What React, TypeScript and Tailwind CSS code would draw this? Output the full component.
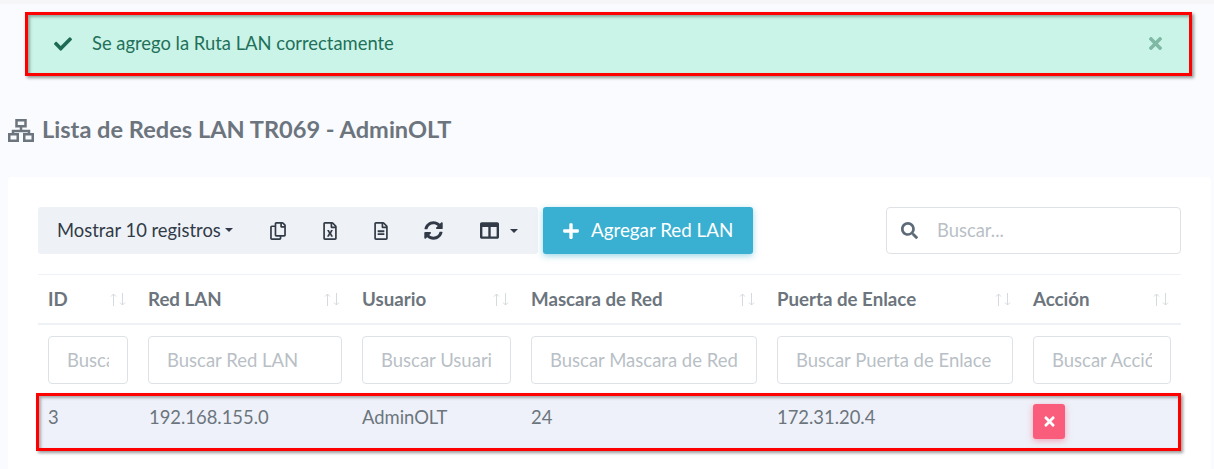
import { FC } from "react";
import {
  FaCheck,
  FaColumns,
  FaPlus,
  FaRegCopy,
  FaRegFileAlt,
  FaRegFileExcel,
  FaSearch,
  FaSyncAlt,
  FaTimes,
} from "react-icons/fa";

const columns = [
  { title: "ID", filter: "Buscar ID" },
  { title: "Red LAN", filter: "Buscar Red LAN" },
  { title: "Usuario", filter: "Buscar Usuario" },
  { title: "Mascara de Red", filter: "Buscar Mascara de Red" },
  { title: "Puerta de Enlace", filter: "Buscar Puerta de Enlace" },
  { title: "Acción", filter: "Buscar Acción" },
];

const Caret: FC = () => (
  <span className="inline-block border-x-[4px] border-t-[4px] border-x-transparent border-t-[#313a46]" />
);

const SortArrows: FC = () => (
  <svg width="18" height="13" viewBox="0 0 18 13" fill="none" stroke="#d5dade" strokeWidth="1" className="mr-[1px]">
    <path d="M4.5 13V1M2 3.5 4.5 1 7 3.5" />
    <path d="M13.5 0v12M11 9.5l2.5 2.5 2.5-2.5" />
  </svg>
);

const NetworkIcon: FC = () => (
  <svg width="26" height="23" viewBox="0 0 26 23" fill="none" stroke="#6c757d" strokeWidth="2.5" className="mr-[8px]">
    <rect x="8.5" y="1.25" width="9" height="6" />
    <path d="M13 7v5M5 15v-3h16v3" />
    <rect x="1.25" y="15.25" width="8.5" height="6.5" />
    <rect x="16.25" y="15.25" width="8.5" height="6.5" />
  </svg>
);

const App: FC = () => {
  return (
    <div className="h-[469px] overflow-hidden bg-[#fafbfe] font-['Lato',sans-serif] text-[18.4px] text-[#6c757d]">
      <div className="h-1 bg-[#f6f6f8]" />

      <div className="mt-2 ml-[25px] flex h-[64px] w-[1167px] items-center border-3 border-[#f00] bg-[#caf4e7] pr-[24px] pb-[1px] pl-[26px] text-[#22705a] shadow-[2px_2px_3px_rgba(0,0,0,0.4),inset_2px_2px_3px_rgba(0,0,0,0.3)]">
        <FaCheck className="text-[18px] text-[#1e6b55]" />
        <span className="ml-[20px] flex-1">Se agrego la Ruta LAN correctamente</span>
        <FaTimes className="text-[19px] text-[#7fb8a5]" />
      </div>

      <h1 className="mt-[39px] ml-2 flex h-[30px] items-center text-[23.6px] font-bold">
        <NetworkIcon />
        Lista de Redes LAN TR069 - AdminOLT
      </h1>

      <section className="mt-[32px] ml-2 h-[300px] w-[1203px] rounded-[4px] bg-white px-[30px] pt-[30px]">
        <div className="flex h-[47px] items-stretch">
          <div className="flex w-[500px] items-center rounded-[3px] bg-[#eef2f7] text-[#313a46]">
            <span className="ml-[19px] flex w-[176px] items-center justify-between">
              Mostrar 10 registros <Caret />
            </span>
            <FaRegCopy className="ml-[36px] text-[18px]" />
            <FaRegFileExcel className="ml-[34px] text-[18px]" />
            <FaRegFileAlt className="ml-[33px] text-[18px]" />
            <FaSyncAlt className="ml-[34px] text-[19px]" />
            <FaColumns className="ml-[37px] text-[19px]" />
            <span className="ml-[11px] flex">
              <Caret />
            </span>
          </div>
          <button className="ml-[5px] flex w-[210px] items-center rounded-[3px] bg-[#39afd1] pl-[19px] text-[18.8px] text-white shadow-[0_2px_6px_rgba(57,175,209,0.5)]">
            <FaPlus className="mr-[11px] text-[18px]" />
            Agregar Red LAN
          </button>
          <div className="ml-auto flex w-[295px] items-center rounded-[4px] border border-[#dee2e6] pl-[14px]">
            <FaSearch className="text-[17px] text-[#5c6b77]" />
            <input
              placeholder="Buscar..."
              className="ml-[19px] w-[200px] outline-none placeholder:text-[#b9bfc6]"
            />
          </div>
        </div>

        <div className="mt-[20px] grid grid-cols-[100px_214px_169px_246px_256px_158px] border-t border-b-2 border-[#eef2f7]">
          {columns.map((col) => (
            <div key={col.title} className="flex h-[48px] items-center justify-between px-[10px] text-[18.7px] font-bold">
              {col.title}
              <SortArrows />
            </div>
          ))}
        </div>

        <div className="grid grid-cols-[100px_214px_169px_246px_256px_158px] pt-[11px] pb-[9px]">
          {columns.map((col) => (
            <div key={col.title} className="px-[10px]">
              <input
                placeholder={col.filter}
                className="h-[48px] w-full rounded-[4px] border border-[#dee2e6] px-[18px] text-[18.5px] outline-none placeholder:text-[#b9bfc6]"
              />
            </div>
          ))}
        </div>

        <div className="-ml-[2px] grid h-[58px] grid-cols-[99px_214px_169px_246px_256px_155px] border-3 border-[#f00] bg-[#eef1f9] shadow-[2px_2px_3px_rgba(0,0,0,0.4),inset_2px_2px_3px_rgba(0,0,0,0.3)]">
          <div className="pt-[8px] pl-[9px]">3</div>
          <div className="pt-[8px] pl-[11px]">192.168.155.0</div>
          <div className="pt-[8px] pl-[10px]">AdminOLT</div>
          <div className="pt-[8px] pl-[10px]">24</div>
          <div className="pt-[8px] pl-[10px]">172.31.20.4</div>
          <div className="pt-[8px] pl-[10px]">
            <button className="flex h-[35px] w-[32px] items-center justify-center rounded-[3px] bg-[#fa5c7c] text-[15px] text-white shadow-[0_2px_6px_rgba(250,92,124,0.5)]">
              <FaTimes />
            </button>
          </div>
        </div>
      </section>
    </div>
  );
};

export default App;
